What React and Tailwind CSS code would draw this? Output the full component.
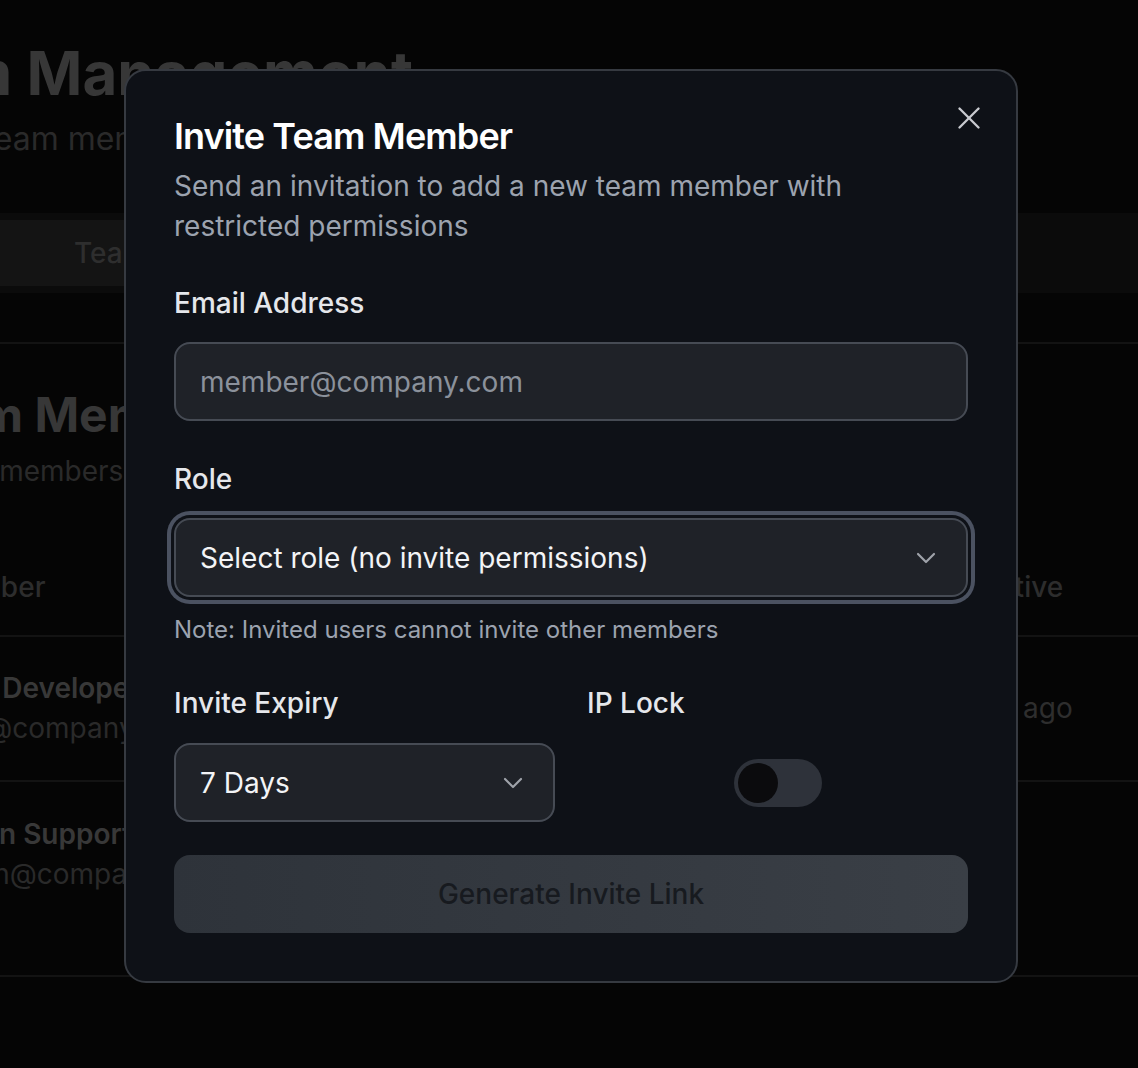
import React from "react";

function Chevron() {
  return (
    <svg width="32" height="32" viewBox="0 0 24 24" fill="none" stroke="currentColor" strokeWidth="1.6" strokeLinecap="round" strokeLinejoin="round" className="text-[#9fa3aa]">
      <path d="m6 9 6 6 6-6" />
    </svg>
  );
}

export default function App() {
  return (
    <div className="relative h-[1068px] w-[1138px] overflow-hidden bg-[#050505] font-['Inter',sans-serif]">
      {/* background page */}
      <div className="pt-[37px]">
        <h1 className="ml-[-149px] whitespace-nowrap text-[60px] font-bold leading-[72px] text-[#373737]">Team Management</h1>
        <p className="ml-[-224px] mt-[6px] whitespace-nowrap text-[32px] leading-[48px] text-[#2a2a2a]">Manage your team members and their access</p>
        <div className="ml-[-40px] mt-[50px] flex h-[80px] bg-[#0b0b0b] p-[7px]">
          <div className="flex w-[340px] items-center rounded-[8px] bg-[#141414] pl-[107px] text-[28px] font-medium text-[#2e2e2e]">Team Members</div>
        </div>
        <div className="mt-[49px] border-t-2 border-[#131313] pt-[39px]">
          <h2 className="ml-[-106px] whitespace-nowrap text-[48px] font-bold leading-[64px] text-[#373737]">Team Members</h2>
          <p className="ml-[-256px] mt-[4px] whitespace-nowrap text-[28px] leading-[40px] text-[#2a2a2a]">Manage your team members and roles</p>
          <div className="mt-[76px]">
            <div className="flex border-b-2 border-[#131313] pb-[28px] text-[28px] font-medium leading-[40px] text-[#2d2d2d]">
              <div className="ml-[-66px] flex-1 whitespace-nowrap">Member</div>
              <div className="w-[223px] shrink-0 whitespace-nowrap">Last Active</div>
            </div>
            <div className="flex items-center border-b-2 border-[#131313] pb-[32px] pt-[31px] text-[28px] leading-[40px]">
              <div className="ml-[-71px] flex-1 whitespace-nowrap">
                <div className="font-semibold text-[#383838]">Lead Developer</div>
                <div className="text-[#2a2a2a]">lead@company.com</div>
              </div>
              <div className="w-[223px] shrink-0 whitespace-nowrap text-[#2e2e2e]">2 hours ago</div>
            </div>
            <div className="flex items-start border-b-2 border-[#131313] pb-[81px] pt-[32px] text-[28px] leading-[40px]">
              <div className="ml-[-71px] flex-1 whitespace-nowrap">
                <div className="font-semibold text-[#383838]">Admin Support</div>
                <div className="text-[#2a2a2a]">admin@company.com</div>
              </div>
              <div className="w-[223px] shrink-0 whitespace-nowrap pt-[20px] text-[#2e2e2e]">Never</div>
            </div>
          </div>
        </div>
      </div>

      {/* modal */}
      <div className="absolute left-[124px] top-[69px] w-[894px] rounded-[22px] border-2 border-[#363a41] bg-[#0e1117] px-[48px] pb-[48px] pt-[47px]">
        <button className="absolute right-[28px] top-[28px] text-[#c9cbd0]">
          <svg width="38" height="38" viewBox="0 0 24 24" fill="none" stroke="currentColor" strokeWidth="1.5" strokeLinecap="round">
            <path d="M18 6 6 18" />
            <path d="m6 6 12 12" />
          </svg>
        </button>
        <h2 className="text-[36px] font-semibold leading-[36px] tracking-[-0.9px] text-white">Invite Team Member</h2>
        <p className="mt-[12px] text-[28px] leading-[40px] text-[#9ca3af]">Send an invitation to add a new team member with restricted permissions</p>

        <label className="mt-[37px] block text-[28px] font-medium leading-[40px] text-[#e5e7eb]">Email Address</label>
        <input
          readOnly
          placeholder="member@company.com"
          className="mt-[19px] block h-[79px] w-full rounded-[16px] border-2 border-[#464b54] bg-[#1f2228] px-[24px] text-[28px] text-white outline-none placeholder:text-[#8b919b]"
        />

        <label className="mt-[38px] block text-[28px] font-medium leading-[40px] text-[#e5e7eb]">Role</label>
        <div className="mt-[19px] flex h-[79px] w-full items-center justify-between rounded-[16px] border-2 border-[#464b54] bg-[#1f2228] px-[24px] text-[28px] text-[#f3f4f6] ring-4 ring-[#4b5261] ring-offset-[3px] ring-offset-[#0e1117]">
          <span>Select role (no invite permissions)</span>
          <Chevron />
        </div>
        <p className="mt-[17px] text-[24px] leading-[32px] text-[#9ca3af]">Note: Invited users cannot invite other members</p>

        <div className="mt-[37px] grid grid-cols-2 gap-x-[32px]">
          <div>
            <div className="text-[28px] font-medium leading-[40px] text-[#e5e7eb]">Invite Expiry</div>
            <div className="mt-[20px] flex h-[79px] items-center justify-between rounded-[16px] border-2 border-[#464b54] bg-[#1f2228] px-[24px] text-[28px] text-[#f3f4f6]">
              <span>7 Days</span>
              <Chevron />
            </div>
          </div>
          <div>
            <div className="text-[28px] font-medium leading-[40px] text-[#e5e7eb]">IP Lock</div>
            <div className="mt-[20px] flex h-[79px] items-center justify-center">
              <div className="flex h-[48px] w-[88px] items-center rounded-full bg-[#2e323a] px-[4px]">
                <div className="h-[40px] w-[40px] rounded-full bg-[#0b0b0d]" />
              </div>
            </div>
          </div>
        </div>

        <button className="mt-[33px] flex h-[78px] w-full items-center justify-center rounded-[16px] bg-gradient-to-r from-[#2e333a] to-[#3a3f46] text-[28px] font-medium text-[#171a1f]">
          Generate Invite Link
        </button>
      </div>
    </div>
  );
}
